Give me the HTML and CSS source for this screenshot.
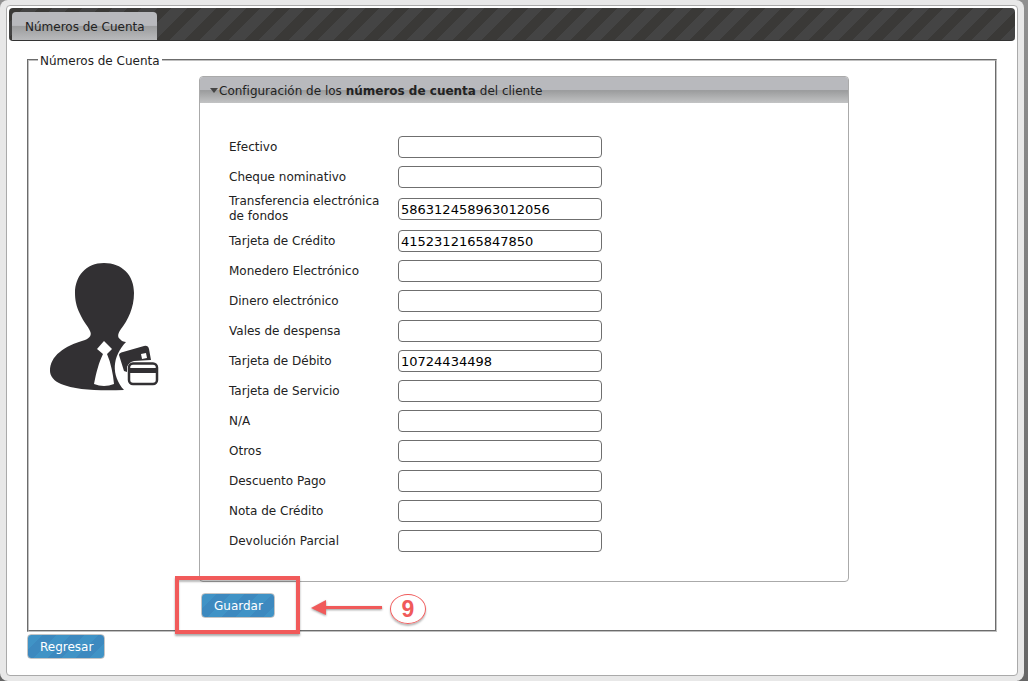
FILE: index.html
```html
<!DOCTYPE html>
<html lang="es">
<head>
<meta charset="utf-8">
<title>Números de Cuenta</title>
<link rel="stylesheet" href="styles.css">
</head>
<body>
<div class="shell">
<main class="page">
  <nav class="tabs"><a class="tab" href="#cuentas">Números de Cuenta</a></nav>
  <form class="content" id="cuentas">
    <fieldset class="group">
      <legend>Números de Cuenta</legend>
      <div class="columns">
        <svg class="avatar" viewBox="0 0 110 130" aria-hidden="true">
          <path fill="#323033" d="M54 1C72 1 84 13 84 31C84 46 78 58 71 67C68 71 67 75 70 77C71 79 74 80 76 80C62 95 61 113 74 128C49 129 25 128 11 122C4 119 0 114 0 109C0 94 14 84 35 78C40 76 42 73 40 69C38 64 34 61 30 52C26 44 25 37 25 31C25 14 36 1 54 1Z"/>
          <path fill="#fff" d="M54 79L62 87L57 92C61 101 63 112 64 122Q54 126 44 122C46 111 49 100 53 92L47 87Z"/>
          <path fill="#323033" d="M73 90L94 84Q98 83 99 87L101 98L84 99Q79 100 77 105V110L74 109L69 93Q69 91 73 90Z"/>
          <path fill="#fff" d="M91 92L96 91L97 96L92 97Z"/>
          <rect x="79" y="101.500" width="28" height="20.500" rx="4" fill="#fff" stroke="#323033" stroke-width="2.500"/>
          <path fill="#323033" d="M79 106H107V111H79Z"/>
        </svg>
        <div class="main">
          <section class="panel">
            <h2 class="panel-head"><svg class="caret" viewBox="0 0 8 5" aria-hidden="true"><path d="M0 0H8L4 5Z"/></svg><span>Configuración de los <b>números de cuenta</b> del cliente</span></h2>
            <div class="fields">
              <div class="row"><label for="f1">Efectivo</label><input id="f1" type="text"></div>
              <div class="row"><label for="f2">Cheque nominativo</label><input id="f2" type="text"></div>
              <div class="row"><label for="f3">Transferencia electrónica de fondos</label><input id="f3" type="text" value="586312458963012056"></div>
              <div class="row"><label for="f4">Tarjeta de Crédito</label><input id="f4" type="text" value="4152312165847850"></div>
              <div class="row"><label for="f5">Monedero Electrónico</label><input id="f5" type="text"></div>
              <div class="row"><label for="f6">Dinero electrónico</label><input id="f6" type="text"></div>
              <div class="row"><label for="f7">Vales de despensa</label><input id="f7" type="text"></div>
              <div class="row"><label for="f8">Tarjeta de Débito</label><input id="f8" type="text" value="10724434498"></div>
              <div class="row"><label for="f9">Tarjeta de Servicio</label><input id="f9" type="text"></div>
              <div class="row"><label for="f10">N/A</label><input id="f10" type="text"></div>
              <div class="row"><label for="f11">Otros</label><input id="f11" type="text"></div>
              <div class="row"><label for="f12">Descuento Pago</label><input id="f12" type="text"></div>
              <div class="row"><label for="f13">Nota de Crédito</label><input id="f13" type="text"></div>
              <div class="row"><label for="f14">Devolución Parcial</label><input id="f14" type="text"></div>
            </div>
          </section>
          <div class="actions">
            <button class="button" type="button">Guardar</button>
            <div class="callout">
              <div class="callout-box"></div>
              <svg class="arrow" viewBox="0 0 72 18" aria-hidden="true"><path d="M0 8L15 0V6H71V9H15V15Z"/></svg>
              <span class="step">9</span>
            </div>
          </div>
        </div>
      </div>
    </fieldset>
    <button class="button" type="button">Regresar</button>
  </form>
</main>
</div>
</body>
</html>
```
FILE: styles.css
```css
* {
  box-sizing: border-box;
}

body {
  margin: 0;
  padding-right: 4px;
  background: linear-gradient(#909090, #666);
  color: #222;
  font-family: "DejaVu Sans", Verdana, sans-serif;
  font-size: 12px;
  line-height: 15px;
}

.shell {
  padding: 5px 6px;
  border-radius: 8px;
  background: #e8e8e8;
}

.page {
  padding: 2px;
  border: 1px solid #aaa;
  border-radius: 4px;
  background: #fff;
}

.tabs {
  display: flex;
  padding: 4px 3px 0;
  border: 1px solid #333;
  border-width: 0 0 1px;
  border-radius: 4px;
  background: repeating-linear-gradient(135deg, #3a3937 0 10px, #444 10px 21px);
}

.tab {
  padding: 8px 12px 5px 13px;
  border-radius: 4px 4px 0 0;
  background: linear-gradient(#b8b9bd 0 48%, #9b9c9d 50%, #b9babc);
  color: #222;
  text-decoration: none;
}

.content {
  padding: 10px 18px 14px;
}

.group {
  min-width: 0;
  margin: 0 0 2px;
  padding: 0 20px 12px;
  border: 2px groove #c0c0c0;
}

.group legend {
  margin-left: -11px;
  padding: 3px 2px 0;
}

.columns {
  display: flex;
  align-items: center;
  gap: 39px;
  padding-top: 7px;
}

.avatar {
  flex: none;
  width: 110px;
  height: 130px;
  margin: 0 0 40px 1px;
}

.main {
  flex: 0 1 650px;
}

.panel {
  border: 1px solid #aaa;
  border-radius: 4px;
}

.panel-head {
  display: flex;
  align-items: center;
  gap: 1px;
  margin: 0;
  padding: 7px 11px 4px 10px;
  border-radius: 3px 3px 0 0;
  background: linear-gradient(#b8b9bd 0 50%, #9b9c9d 52%, #c2c3c4);
  font-size: 12px;
  font-weight: normal;
}

.caret {
  width: 8px;
  height: 5px;
  margin-bottom: 2px;
  fill: #454545;
}

.fields {
  padding: 29px;
  padding-bottom: 25px;
}

.row {
  display: grid;
  grid-template-columns: 160px 204px;
  gap: 9px;
  align-items: center;
  min-height: 30px;
  padding: 2px 0;
}

.row input {
  width: 100%;
  height: 22px;
  padding: 1px 2px;
  border: 1px solid #6f6f6f;
  border-radius: 4px;
  background: #fff;
  color: #000;
  font: 13px "DejaVu Sans", Verdana, sans-serif;
}

.actions {
  position: relative;
  padding: 11px 2px 0;
}

.button {
  display: block;
  padding: 5px 11px 3px 12px;
  border: 1px solid #c5c5c5;
  border-radius: 4px;
  background: repeating-linear-gradient(135deg, #4093c6 0 10px, #3d89bf 10px 20px);
  color: #fff;
  font: inherit;
}

.callout {
  position: absolute;
  top: -6px;
  left: -24px;
  display: flex;
  align-items: center;
  pointer-events: none;
}

.callout-box {
  width: 125px;
  height: 58px;
  border: 4px solid #f15a5a;
  box-shadow: 0 2px 2px #0005, inset 0 2px 2px #0004;
}

.arrow {
  width: 72px;
  height: 18px;
  margin: 8px 7px 0 11px;
  fill: #f05a5a;
  filter: drop-shadow(0 1px 1px #0006);
}

.step {
  width: 36px;
  margin-top: 8px;
  border: 1px solid #f05a5a;
  border-radius: 50%;
  box-shadow: 0 2px 2px #0004;
  color: #f05a5a;
  font: bold 23px/28px "Liberation Sans", Arial, sans-serif;
  text-align: center;
}
```
